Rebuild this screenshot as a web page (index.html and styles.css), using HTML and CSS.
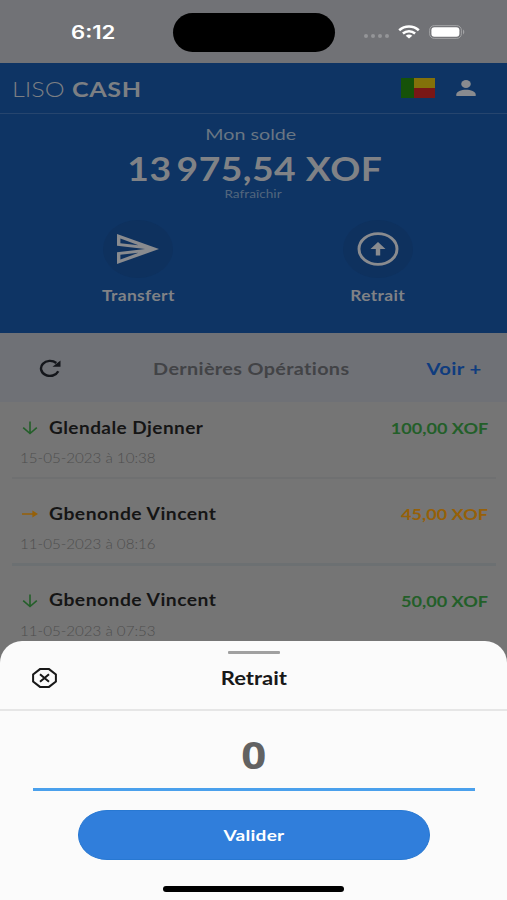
FILE: index.html
```html
<!DOCTYPE html>
<html lang="fr">
<head>
<meta charset="utf-8">
<title>Liso Cash</title>
<link rel="stylesheet" href="styles.css">
</head>
<body>
<main class="phone">
  <div class="status">
    <span class="clock">6:12</span>
    <span class="island"></span>
    <div class="signals">
      <i class="dots"><b></b><b></b><b></b><b></b></i>
      <svg class="wifi" viewBox="0 0 22 14" width="22" height="14" fill="none" stroke="#fff" stroke-width="2.6"><path d="M1.2 5.2C6.8.3 15.2.3 20.8 5.2M4.9 8.5c3.5-3 8.7-3 12.2 0"/><path d="M11 13.6 7.7 10.8c1.9-1.6 4.7-1.6 6.6 0z" fill="#fff" stroke="none"/></svg>
      <svg class="battery" viewBox="0 0 36 14" width="36" height="14"><rect x=".6" y=".6" width="31.8" height="12.8" rx="4.6" fill="none" stroke="#a1a2a4"/><rect x="2.4" y="2.2" width="28" height="9.6" rx="3" fill="#fff"/><path d="M34 4.6c1.7.7 1.7 4.1 0 4.8z" fill="#a1a2a4"/></svg>
    </div>
  </div>

  <header class="topbar">
    <div class="brand"><span class="light">LISO</span><span class="strong">CASH</span></div>
    <div class="flag"><i class="green"></i><i class="yellow"></i><i class="red"></i></div>
    <svg class="user" viewBox="0 0 20 16" width="20" height="16" fill="#898b8f"><ellipse cx="10" cy="4" rx="4.8" ry="4"/><path d="M.3 16v-1.6c0-2.7 5-4.6 9.7-4.6s9.7 1.9 9.7 4.6V16z"/></svg>
  </header>

  <section class="balance">
    <p class="label"><span>Mon solde</span></p>
    <p class="amount"><span>13&#8201;975,54 XOF</span></p>
    <p class="refresh"><span>Rafraîchir</span></p>
    <div class="actions">
      <div class="action">
        <div class="disc"><svg viewBox="2 3 21 18" preserveAspectRatio="none" width="42" height="30" fill="#898b8f"><path d="M3.7 5.7l9 4-9-1.2V5.7m9 8.6l-9 4v-2.8l9-1.2M2.01 3L2 10l14 2-14 2 .01 7L23 12 2.01 3z"/></svg></div>
        <span class="name">Transfert</span>
      </div>
      <div class="action">
        <div class="disc"><svg viewBox="0 0 42 36" width="42" height="36"><ellipse cx="21" cy="18" rx="19" ry="15.4" fill="none" stroke="#898b8f" stroke-width="2.9"/><path d="m21 11 7.5 7h-5.3v6.5h-4.4V18h-5.3z" fill="#898b8f"/></svg></div>
        <span class="name">Retrait</span>
      </div>
    </div>
  </section>

  <div class="ops-head">
    <svg class="reload" viewBox="0 0 22 18" width="22" height="18"><path d="M19.3 12.3A9 7.5 0 1 1 17.3 4" fill="none" stroke="#14161b" stroke-width="2.4"/><path d="M21.5 1.5v6.3h-8z" fill="#14161b"/></svg>
    <span class="ops-title">Dernières Opérations</span>
    <span class="more">Voir +</span>
  </div>

  <ul class="ops">
    <li>
      <div class="line"><svg viewBox="0 0 16 14" width="16" height="14" class="in"><path d="M8 .5v12M1.2 6.7 8 12.5l6.8-5.8"/></svg><span class="who djenner">Glendale Djenner</span><span class="sum in">100,00 XOF</span></div>
      <p class="date"><span>15-05-2023 à 10:38</span></p>
    </li>
    <li>
      <div class="line"><svg viewBox="0 0 16 14" width="16" height="14" class="out"><path d="M0 7h14M11.2 4.9 14.5 7l-3.3 2.1z"/></svg><span class="who">Gbenonde Vincent</span><span class="sum out">45,00 XOF</span></div>
      <p class="date"><span>11-05-2023 à 08:16</span></p>
    </li>
    <li>
      <div class="line"><svg viewBox="0 0 16 14" width="16" height="14" class="in"><path d="M8 .5v12M1.2 6.7 8 12.5l6.8-5.8"/></svg><span class="who">Gbenonde Vincent</span><span class="sum in">50,00 XOF</span></div>
      <p class="date"><span>11-05-2023 à 07:53</span></p>
    </li>
  </ul>

  <section class="sheet">
    <div class="grip"></div>
    <div class="sheet-head">
      <svg viewBox="0 0 25 20" width="25" height="20" fill="none" stroke="#181818" stroke-width="2"><path d="M8 1.1h9l6.9 5.4v7L17 18.9H8L1.1 13.5v-7z"/><path d="m8 6.2 9 7.6M17 6.2l-9 7.6"/></svg>
      <h1><span>Retrait</span></h1>
    </div>
    <div class="field"><span>0</span></div>
    <button class="submit"><span>Valider</span></button>
    <div class="home"></div>
  </section>
</main>
</body>
</html>
```
FILE: styles.css
```css
* { box-sizing: border-box; margin: 0; padding: 0; }
body { background: #757575; font-family: Lato, "Liberation Sans", sans-serif; }
span { display: inline-block; white-space: nowrap; }
svg { display: block; flex: none; }
.phone { position: relative; width: 507px; height: 900px; overflow: hidden; background: #757575; }

.status { height: 63px; background: #717276; display: grid; grid-template-columns: 173px 162px 1fr; align-items: center; }
.clock { color: #fff; font: 600 18px/22px Inter, sans-serif; margin: 2px 0 0 71px; transform: scaleX(1.23); transform-origin: left; justify-self: start; }
.island { height: 39px; border-radius: 20px; background: #000; margin-top: 1px; }
.signals { display: flex; align-items: center; padding-left: 29px; }
.dots { display: flex; gap: 3px; margin: 9px 9px 0 0; }
.dots b { width: 4px; height: 4px; border-radius: 2px; background: #949598; }
.battery { margin-left: 9px; }

.topbar { height: 51px; background: #0e3464; border-bottom: 1px solid #26456e; display: flex; align-items: center; padding: 0 31px 0 12px; }
.brand { color: #7c7f83; font-size: 21.5px; line-height: 28px; display: flex; flex: 1; padding-top: 2px; }
.brand .light { font-weight: 300; width: 60px; }
.brand .light, .brand .strong { transform-origin: left; transform: scaleX(1.17); }
.brand .strong { font-weight: 700; letter-spacing: .5px; }
.flag { width: 34px; height: 20px; display: grid; grid-template: 1fr 1fr / 13px 1fr; margin-right: 21px; }
.green { grid-row: span 2; background: #165209; }
.yellow { background: #83710a; }
.red { background: #791716; }

.balance { height: 219px; background: #0e3464; text-align: center; color: #808286; }
.label { padding-top: 9px; font-size: 15.5px; line-height: 22px; color: #697683; margin-left: -5px; }
.label span { transform: scaleX(1.27); }
.amount { font-size: 33px; line-height: 40px; font-weight: 700; padding: 3px 0 0 3px; }
.amount span { transform: scaleX(1.13); letter-spacing: .4px; }
.refresh { font-size: 10.5px; line-height: 14px; color: #52667d; margin-top: -1px; }
.refresh span { transform: scaleX(1.3); }
.actions { display: flex; justify-content: space-between; padding: 19px 94px 0 103px; }
.action { width: 70px; display: flex; flex-direction: column; align-items: center; }
.disc { width: 70px; height: 58px; border-radius: 50%; background: #0e315e; display: flex; align-items: center; justify-content: center; }
.name { font-size: 15px; line-height: 20px; font-weight: 700; letter-spacing: .3px; margin-top: 7px; transform: scaleX(1.16); }

.ops-head { height: 69px; background: #6f7176; display: flex; align-items: center; justify-content: space-between; padding: 0 25px 0 39px; }
.ops-title { color: #424346; font-size: 17px; font-weight: 700; letter-spacing: .3px; transform: scaleX(1.165); margin: 2px 0 0 7px; }
.more { color: #0f3c7e; font-size: 17.5px; font-weight: 700; letter-spacing: .3px; transform: scaleX(1.16); transform-origin: right; margin-top: 1px; }

.ops { list-style: none; padding: 0 11px 0 12px; }
.ops li { height: 86.5px; padding: 14px 8px 0 10px; }
.ops li:first-child { height: 77px; border-bottom: 2px solid #6f7071; }
.ops li:nth-child(2) { border-bottom: 3px solid #6c7072; padding-top: 23px; }
.ops li:nth-child(3) { padding-top: 23px; }
.line { display: flex; align-items: center; height: 24px; }
.line svg { fill: none; stroke-width: 1.6; }
.who { color: #151515; font-size: 16.5px; font-weight: 700; letter-spacing: .4px; margin: 0 0 1px 11px; transform: scaleX(1.17); transform-origin: left; }
.who.djenner { transform: scaleX(1.15); }
.sum { font-size: 16px; font-weight: 700; margin: 0 0 1px auto; transform: scaleX(1.13); transform-origin: right; }
.in { color: #235f29; stroke: #235f29; }
.out { color: #966008; stroke: #966008; }
svg.out { fill: #966008; }
.date { color: #4e4e4e; font-size: 14px; line-height: 20px; margin: 8px 0 0 -2px; font-weight: 300; }
.date span { transform: scaleX(1.08); transform-origin: left; }

.sheet { position: absolute; left: 0; right: 0; bottom: 0; height: 259px; background: #fbfbfb; border-radius: 22px 22px 0 0; display: flex; flex-direction: column; align-items: center; }
.grip { width: 52px; height: 3px; background: #a0a0a0; margin-top: 10px; border-radius: 1px; }
.sheet-head { align-self: stretch; height: 57px; padding: 0 32px 7px; display: grid; grid-template-columns: 25px 1fr 25px; align-items: center; border-bottom: 2px solid #e6e6e6; }
h1 { font-size: 18.5px; line-height: 24px; font-weight: 700; text-align: center; color: #181818; padding-left: 1px; }
h1 span { transform: scaleX(1.19); }
.field { width: 442px; height: 80px; border-bottom: 3px solid #4aa0ec; text-align: center; color: #626262; font: 700 38px/87px "Open Sans", sans-serif; }
.field span { transform: scaleX(1.15); }
.submit { width: 352px; height: 50px; margin-top: 19px; border: 1px solid #2878d2; border-radius: 29px / 25px; background: #307edb; color: #fff; font: 700 15px/20px Lato, sans-serif; }
.submit span { transform: scaleX(1.27); letter-spacing: .2px; }
.home { width: 181px; height: 6px; border-radius: 3px; background: #000; margin-top: 26px; }
```
